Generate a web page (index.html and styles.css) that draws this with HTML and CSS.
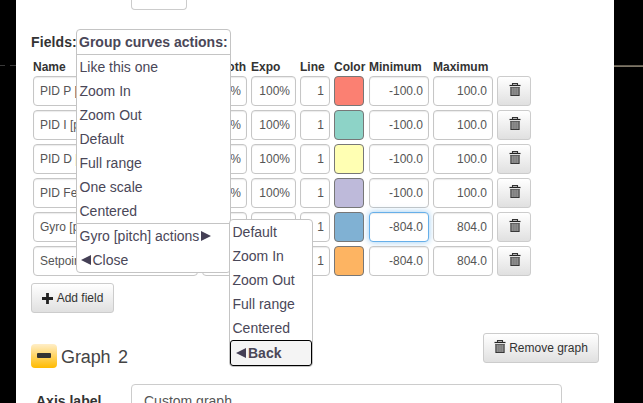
FILE: index.html
```html
<!DOCTYPE html>
<html lang="en">
<head>
<meta charset="utf-8">
<title>Graph setup</title>
<link rel="stylesheet" href="styles.css">
</head>
<body>
<svg class="defs" width="0" height="0" aria-hidden="true">
  <symbol id="trash" viewBox="0 0 12 14">
    <path d="M0.5 2.5H11.5" fill="none" stroke="#222" stroke-width="1.2"/>
    <path d="M3.5 2.4V.6H8.5V2.4" fill="none" stroke="#333" stroke-width="1.1"/>
    <path d="M1.5 4H10.5V13H1.5Z" fill="#aaa"/>
    <path d="M2 4V12.5H10V4" fill="none" stroke="#333" stroke-width="1.1"/>
    <path d="M4.1 4V12.5M6 4V12.5M7.9 4V12.5M1.5 4.5H10.5" fill="none" stroke="#555" stroke-width=".8"/>
  </symbol>
</svg>
<main class="dialog">
  <div class="stub"></div>
  <h4 class="fields-title"><span class="t">Fields:</span></h4>
  <div class="grid head">
    <span>Name</span><span class="smooth-label">Smooth</span><span>Expo</span><span>Line</span><span>Color</span><span>Minimum</span><span>Maximum</span>
  </div>
  <div class="grid row"><div class="field name">PID P [pitch]</div><div class="field">0%</div><div class="field">100%</div><div class="field">1</div><div class="swatch red"></div><div class="field">-100.0</div><div class="field">100.0</div><div class="btn"><svg class="trash"><use href="#trash"/></svg></div></div>
  <div class="grid row"><div class="field name">PID I [pitch]</div><div class="field">0%</div><div class="field">100%</div><div class="field">1</div><div class="swatch teal"></div><div class="field">-100.0</div><div class="field">100.0</div><div class="btn"><svg class="trash"><use href="#trash"/></svg></div></div>
  <div class="grid row"><div class="field name">PID D [pitch]</div><div class="field">0%</div><div class="field">100%</div><div class="field">1</div><div class="swatch yellow"></div><div class="field">-100.0</div><div class="field">100.0</div><div class="btn"><svg class="trash"><use href="#trash"/></svg></div></div>
  <div class="grid row"><div class="field name">PID Feedforward [pitch]</div><div class="field">0%</div><div class="field">100%</div><div class="field">1</div><div class="swatch violet"></div><div class="field">-100.0</div><div class="field">100.0</div><div class="btn"><svg class="trash"><use href="#trash"/></svg></div></div>
  <div class="grid row"><div class="field name">Gyro [pitch]</div><div class="field">0%</div><div class="field">100%</div><div class="field">1</div><div class="swatch blue"></div><div class="field focus">-804.0</div><div class="field">804.0</div><div class="btn"><svg class="trash"><use href="#trash"/></svg></div></div>
  <div class="grid row"><div class="field name">Setpoint [pitch]</div><div class="field">0%</div><div class="field">100%</div><div class="field">1</div><div class="swatch orange"></div><div class="field">-804.0</div><div class="field">804.0</div><div class="btn"><svg class="trash"><use href="#trash"/></svg></div></div>
  <div class="btn add"><svg class="plus" viewBox="0 0 11 11"><path d="M5.5 0V11M0 5.5H11" stroke="#222" stroke-width="2.8"/></svg><span>Add field</span></div>
  <div class="graph-head">
    <div class="collapse"></div><h3>Graph&nbsp; 2</h3>
    <div class="btn remove"><svg class="trash"><use href="#trash"/></svg><span>Remove graph</span></div>
  </div>
  <div class="axis"><label>Axis label</label><div class="axis-input">Custom graph</div></div>
</main>
<div class="trace left"></div>
<div class="trace right"></div>
<div class="menu main-menu">
  <div class="item title">Group curves actions:</div>
  <div class="item">Like this one</div>
  <div class="item">Zoom In</div>
  <div class="item">Zoom Out</div>
  <div class="item">Default</div>
  <div class="item">Full range</div>
  <div class="item">One scale</div>
  <div class="item">Centered</div>
  <div class="item sep">Gyro [pitch] actions<i class="tri next"></i></div>
  <div class="item"><i class="tri prev"></i>Close</div>
</div>
<div class="menu sub-menu">
  <div class="item">Default</div>
  <div class="item">Zoom In</div>
  <div class="item">Zoom Out</div>
  <div class="item">Full range</div>
  <div class="item">Centered</div>
  <div class="item back"><i class="tri prev"></i>Back</div>
</div>
</body>
</html>
```

FILE: styles.css
```css
* { box-sizing: border-box; }
body {
  margin: 0; width: 643px; height: 403px; overflow: hidden; position: relative;
  background: #000; color: #333; font-family: "Liberation Sans", Arial, sans-serif; font-size: 12px;
}
.defs { position: absolute; }
.dialog { width: 598px; height: 403px; margin-left: 16px; background: #fff; overflow: hidden; }
.stub { width: 56px; height: 10px; margin-left: 115px; border: 1px solid #ccc; border-top: 0; border-radius: 0 0 4px 4px; }
.fields-title { margin: 23px 0 0 15px; height: 18px; line-height: 18px; font-size: 14px; letter-spacing: .1px; }
.grid { display: grid; grid-template-columns: 165px 45px 45px 30px 31px 60px 60px 34px; column-gap: 4px; margin-left: 17px; width: 498px; }
.head { margin-top: 8px; height: 17px; line-height: 17px; font-weight: bold; white-space: nowrap; }
.smooth-label { justify-self: end; margin-right: 1px; }
.row { height: 30px; margin-bottom: 4px; }
.field { border: 1px solid #c6c6c6; border-radius: 4px; background: #fff; line-height: 28px; padding-right: 5px; text-align: right; color: #555; white-space: nowrap; overflow: hidden; box-shadow: inset 0 1px 1px rgba(0,0,0,.08); }
.name { text-align: left; padding-left: 6px; }
.focus { border-color: #66afe9; box-shadow: inset 0 1px 1px rgba(0,0,0,.08), 0 0 7px rgba(102,175,233,.65); }
.swatch { width: 30px; border: 1px solid #777; border-radius: 4px; }
.red { background: #fb8072; }
.teal { background: #8dd3c7; }
.yellow { background: #ffffb3; }
.violet { background: #bebada; }
.blue { background: #80b1d3; }
.orange { background: #fdb462; }
.btn { display: flex; align-items: center; justify-content: center; gap: 3px; height: 30px; border: 1px solid #ccc; border-radius: 3px; background: linear-gradient(#fff, #e0e0e0); color: #333; white-space: nowrap; }
.row .btn { padding: 0 0 2px 2px; }
.trash { width: 12px; height: 14px; flex: none; }
.add { width: 83px; margin: 7px 0 0 15px; gap: 4px; }
.plus { width: 11px; height: 11px; }
.graph-head { display: flex; align-items: center; height: 30px; margin: 20px 15px 0; }
.remove .trash { margin-bottom: 2px; }
.collapse { width: 26px; height: 24px; margin-top: 15px; padding: 9px 6px; border-radius: 4px; background: linear-gradient(#ffeec8, #ffbb00); }
.collapse::before { content: ""; display: block; width: 14px; height: 5px; border-radius: 1px; background: #333; }
h3 { margin: 18px auto 0 4px; font-size: 18px; font-weight: normal; line-height: 24px; word-spacing: -1.2px; letter-spacing: -.1px; color: #444; }
.remove { width: 116px; }
.axis { display: flex; margin: 21px 0 0 20px; }
.axis label { width: 95px; padding-top: 9px; font-size: 14px; line-height: 16px; font-weight: bold; }
.axis-input { width: 431px; height: 34px; border: 1px solid #ccc; border-radius: 4px; padding-left: 12px; line-height: 32px; font-size: 14px; color: #555; }
.trace { position: absolute; top: 65px; height: 1px; }
.left { left: 0; width: 16px; background: linear-gradient(90deg, #393939 5px, #000 5px, #000 10px, #393939 10px); }
.right { left: 614px; width: 29px; height: 2px; background: linear-gradient(#544f45, #8b8271); }
.menu { position: absolute; border: 1px solid #c4c4c4; background: #fff; border-radius: 4px; font-size: 14px; color: #4a4758; }
.main-menu { left: 76px; top: 29px; width: 155px; height: 244px; }
.sub-menu { left: 229px; top: 219px; width: 84px; height: 148px; }
.item { height: 24px; line-height: 24px; padding-left: 2.5px; white-space: nowrap; letter-spacing: 0; }
.title { height: 25px; border-bottom: 1px solid #c4c4c4; font-weight: bold; padding-left: 2px; }
.sep { height: 25px; border-top: 1px solid #c4c4c4; }
.back { height: 26px; border: 1px solid #000; border-radius: 3px; background: #f4f4f4; font-weight: bold; padding-left: 4px; }
.tri { display: inline-block; width: 0; height: 0; border: 5px solid transparent; vertical-align: 0; }
.next { border-left: 10px solid #443f55; border-right: 0; margin-left: 2px; }
.prev { border-right: 10px solid #443f55; border-left: 0; margin: 0 2px 0 1px; }
```
